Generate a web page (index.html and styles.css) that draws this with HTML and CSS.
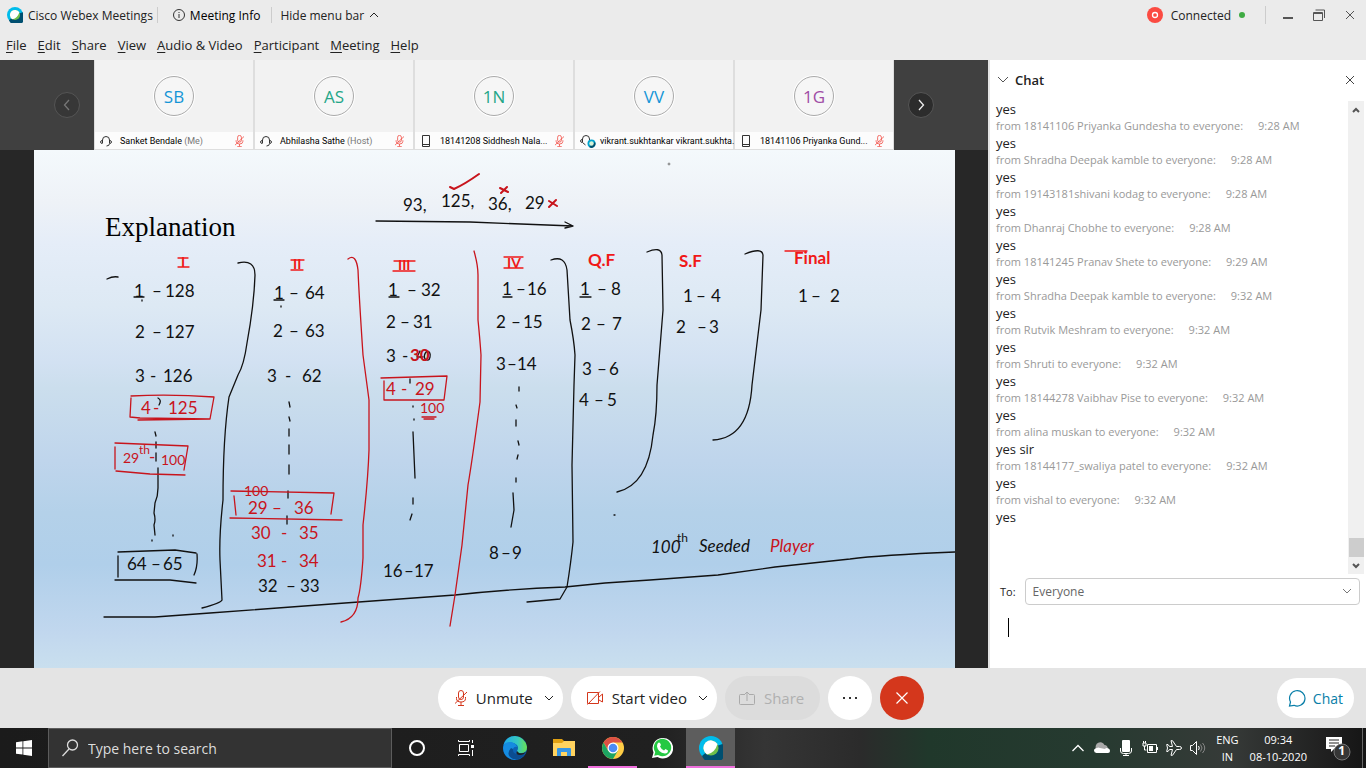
FILE: index.html
```html
<!DOCTYPE html>
<html lang="en">
<head>
<meta charset="utf-8">
<title>Cisco Webex Meetings</title>
<link rel="stylesheet" href="styles.css">
</head>
<body>
<svg class="defs" aria-hidden="true">
  <defs>
    <linearGradient id="edge-a" x1="0" y1="0" x2="1" y2="0"><stop offset="0" stop-color="#1fa8e8"/><stop offset=".6" stop-color="#36c9c0"/><stop offset="1" stop-color="#6be04f"/></linearGradient>
    <symbol id="webex" viewBox="0 0 24 24"><circle cx="12" cy="12" r="12" fill="#00bceb"/><path d="M23.5 8A12 12 0 1 1 3 20L12 12Z" fill="#004f70"/><circle cx="12" cy="12" r="7.6" fill="#6ebe4a"/><path d="M18.500 8A7.600 7.600 0 1 0 8 18.400Q16 17 18.500 8Z" fill="#fff"/></symbol>
    <symbol id="mic-off" viewBox="0 0 14 16"><g fill="none" stroke="currentColor"><rect x="4.500" y=".5" width="5" height="9" rx="2.500"/><path d="M2.500 7v1.500q0 3.500 4.500 3.500t4.500-3.500V7M7 12v3M4 15.500h6M1 13.500 13 2"/></g></symbol>
    <symbol id="headset" viewBox="0 0 12 12"><path d="M2.500 8V5a3.500 3.500 0 0 1 7 0v3M2.500 5.500q-2 0-2 1.500t2 1.500M9.500 5.500q2 0 2 1.500t-2 1.500q0 2.500-3 2.500" fill="none" stroke="currentColor"/></symbol>
    <symbol id="phone" viewBox="0 0 12 12"><path d="M2.500.5h7v11h-7zM2.500 9.500h7" fill="none" stroke="currentColor"/></symbol>
    <symbol id="down" viewBox="0 0 10 10"><path d="M1 3l4 4 4-4" fill="none" stroke="currentColor"/></symbol>
    <symbol id="cross" viewBox="0 0 10 10"><path d="M1 1l8 8M9 1 1 9" fill="none" stroke="currentColor"/></symbol>
  </defs>
</svg>

<header class="titlebar">
  <svg class="i16"><use href="#webex"/></svg>
  <span class="app-name">Cisco Webex Meetings</span>
  <button class="bar-btn info"><svg class="i12" viewBox="0 0 12 12"><circle cx="6" cy="6" r="5.500" fill="none" stroke="#333"/><path d="M6 5v4M6 3v1" stroke="#333"/></svg>Meeting Info</button>
  <button class="bar-btn">Hide menu bar<svg class="i10 flip"><use href="#down"/></svg></button>
  <div class="status">
    <svg class="i16" viewBox="0 0 16 16"><circle cx="8" cy="8" r="8" fill="#fb4b42"/><circle cx="8" cy="8" r="2.500" fill="none" stroke="#fff" stroke-width="1.300"/></svg>
    <span>Connected</span><i class="dot"></i>
  </div>
  <div class="window-btns">
    <button aria-label="Minimize"><svg class="i10" viewBox="0 0 10 10"><path d="M0 8h10" stroke="#555" stroke-width="2"/></svg></button>
    <button aria-label="Restore"><svg class="i12" viewBox="0 0 12 12"><path d="M.5 3.500h9v8h-9zM.5 4.500h9M2.500 1h9v8" fill="none" stroke="#555"/></svg></button>
    <button aria-label="Close"><svg class="i10"><use href="#cross"/></svg></button>
  </div>
</header>

<nav class="menubar">
  <button><u>F</u>ile</button><button><u>E</u>dit</button><button><u>S</u>hare</button><button><u>V</u>iew</button><button><u>A</u>udio &amp; Video</button><button><u>P</u>articipant</button><button><u>M</u>eeting</button><button><u>H</u>elp</button>
</nav>

<main class="workspace">
  <section class="stage">
    <div class="filmstrip">
      <div class="side left"><button class="round dim" aria-label="Previous"><svg class="i12" viewBox="0 0 12 12"><path d="M8 1 3.500 6 8 11" fill="none" stroke="currentColor" stroke-width="1.300"/></svg></button></div>
      <article class="person"><div class="avatar blue">SB</div><footer><svg class="i12"><use href="#headset"/></svg><span class="name">Sanket Bendale <em>(Me)</em></span><svg class="mute"><use href="#mic-off"/></svg></footer></article>
      <article class="person"><div class="avatar teal">AS</div><footer><svg class="i12"><use href="#headset"/></svg><span class="name">Abhilasha Sathe <em>(Host)</em></span><svg class="mute"><use href="#mic-off"/></svg></footer></article>
      <article class="person"><div class="avatar teal">1N</div><footer><svg class="i12"><use href="#phone"/></svg><span class="name">18141208 Siddhesh Nala...</span><svg class="mute"><use href="#mic-off"/></svg></footer></article>
      <article class="person"><div class="avatar blue">VV</div><footer><svg class="call" viewBox="0 0 16 14"><path d="M2.500 8V5a3.500 3.500 0 0 1 7 0v1M2.500 5.500q-2 0-2 1.500t2 1.500l3 2.500" fill="none" stroke="#333"/><circle cx="11.500" cy="9.500" r="4" fill="#00a3cf"/><path d="M15 8a4 4 0 0 1-6 5z" fill="#00506e"/><circle cx="11.500" cy="9.500" r="2.200" fill="#d8f3d8"/></svg><span class="name">vikrant.sukhtankar vikrant.sukhta...</span></footer></article>
      <article class="person"><div class="avatar purple">1G</div><footer><svg class="i12"><use href="#phone"/></svg><span class="name">18141106 Priyanka Gund...</span><svg class="mute"><use href="#mic-off"/></svg></footer></article>
      <div class="side right"><button class="round" aria-label="Next"><svg class="i12" viewBox="0 0 12 12"><path d="M4 1l4.500 5L4 11" fill="none" stroke="currentColor" stroke-width="1.300"/></svg></button></div>
    </div>
    <div class="share">
      <svg class="slide" viewBox="34 150 921 518" role="img" aria-label="Explanation slide with handwritten match pairings">
        <text class="slide-title" x="105" y="236">Explanation</text>
        <g class="ink">
          <text y="211"><tspan x="403">93,</tspan><tspan x="441" y="207">125,</tspan><tspan x="488" y="210">36,</tspan><tspan x="525" y="209">29</tspan></text>
          <text y="298"><tspan x="134" y="297">1</tspan><tspan x="152">–</tspan><tspan x="165">128</tspan></text>
          <text y="338"><tspan x="135">2</tspan><tspan x="152">–</tspan><tspan x="165">127</tspan></text>
          <text y="382"><tspan x="135">3</tspan><tspan x="150">-</tspan><tspan x="163">126</tspan></text>
          <text y="570"><tspan x="127">64</tspan><tspan x="151">–</tspan><tspan x="163">65</tspan></text>
          <text y="299"><tspan x="274">1</tspan><tspan x="289">–</tspan><tspan x="305">64</tspan></text>
          <text y="337"><tspan x="273">2</tspan><tspan x="289">–</tspan><tspan x="305">63</tspan></text>
          <text y="382"><tspan x="267">3</tspan><tspan x="285">-</tspan><tspan x="302">62</tspan></text>
          <text y="592"><tspan x="258">32</tspan><tspan x="286">–</tspan><tspan x="300">33</tspan></text>
          <text y="296"><tspan x="388">1</tspan><tspan x="407">–</tspan><tspan x="421">32</tspan></text>
          <text y="328"><tspan x="386">2</tspan><tspan x="400">–</tspan><tspan x="413">31</tspan></text>
          <text y="362"><tspan x="386">3</tspan><tspan x="402">-</tspan></text>
          <text y="577"><tspan x="383">16</tspan><tspan x="404">–</tspan><tspan x="414">17</tspan></text>
          <text y="295"><tspan x="502">1</tspan><tspan x="516">–</tspan><tspan x="527">16</tspan></text>
          <text y="328"><tspan x="496">2</tspan><tspan x="511">–</tspan><tspan x="523">15</tspan></text>
          <text y="370"><tspan x="496">3</tspan><tspan x="507">–</tspan><tspan x="517">14</tspan></text>
          <text y="559"><tspan x="489">8</tspan><tspan x="501">–</tspan><tspan x="512">9</tspan></text>
          <text y="295"><tspan x="580">1</tspan><tspan x="597">–</tspan><tspan x="611">8</tspan></text>
          <text y="330"><tspan x="581">2</tspan><tspan x="596">–</tspan><tspan x="612">7</tspan></text>
          <text y="375"><tspan x="582">3</tspan><tspan x="597">–</tspan><tspan x="609">6</tspan></text>
          <text y="406"><tspan x="579">4</tspan><tspan x="594">–</tspan><tspan x="607">5</tspan></text>
          <text y="302"><tspan x="683">1</tspan><tspan x="696">–</tspan><tspan x="711">4</tspan></text>
          <text y="333"><tspan x="676">2</tspan><tspan x="697">–</tspan><tspan x="709">3</tspan></text>
          <text y="302"><tspan x="798">1</tspan><tspan x="811">–</tspan><tspan x="830">2</tspan></text>
          <text class="word" x="651" y="553">100</text><text class="sup" x="677" y="542">th</text><text class="word" x="699" y="552">Seeded</text>
          <path d="M376 221 470 222 573 226M565 222l8 4-8 2M107 279q6-3 11-2M238 263q17-4 17 12-1 30-8 68-3 22-9 32l-9 22q-6 40-6 103-4 35-3 60l2 40q-1 3-20 8"/>
          <path d="M104 617h51l55-4 135-10 110-8q55-6 110-8l40-4 45-3 68-5 57-8 75-8q30-4 105-7"/>
          <path d="M551 260q14-5 16 10l3 50q4 20 5 35l-1 30-2 80 1 77q-2 20-6 45l-7 12-33 3M647 252q14-6 15 3l1 55-6 75q0 30-4 50-5 50-36 57M745 254q17-7 18 1l-2 55-9 75q-3 53-39 55"/>
          <path d="M118 552l57-2 21 3M118 556v21M115 580h55l26 3M197 554q1 12-3 21M158 398q4 2 1 7M155 432l1 4M156 442v6M156 453v8M158 468v20q0 8-3 15l-1 10q2 7 0 12l1 10M152 540v1M173 535v1"/>
          <path d="M289 402l1 5M289 417l1 4M289 429v7M289 445v9M289 465v9M288 491v7M287 516v8M410 379v4M413 406v1M414 419v1M413 432l2 46M413 498v6M412 514l-2 6"/>
          <path d="M519 387v4M516 405l1 3M516 420v6M518 441l1 4M518 455l-1 4M516 478v4M513 493l1 17-3 17M134 297h10M274 300h10M389 297h10M503 297h9M580 297h11M142 300v1M281 306v1M614 515h1"/>
          <path d="M427 351q-4 4-2 8 4 3 5-2t-3-6M420 351l-3 6h6"/>
          <path class="faint" d="M668 164h2M669 163v2"/>
        </g>
        <g class="ink red">
          <text y="417"><tspan x="141" y="414">4</tspan><tspan x="153">-</tspan><tspan x="168">125</tspan></text>
          <text y="463"><tspan x="123" class="small">29</tspan><tspan x="139" y="454" class="sup">th</tspan><tspan x="149" y="463">-</tspan><tspan x="161" y="465" class="small">100</tspan></text>
          <text class="small" x="244" y="496">100</text>
          <text y="514"><tspan x="248">29</tspan><tspan x="272">–</tspan><tspan x="294">36</tspan></text>
          <text y="539"><tspan x="251">30</tspan><tspan x="281">-</tspan><tspan x="299">35</tspan></text>
          <text y="567"><tspan x="257">31</tspan><tspan x="281">-</tspan><tspan x="299">34</tspan></text>
          <text class="heavy" x="410" y="361">30</text>
          <text y="395"><tspan x="386">4</tspan><tspan x="401">-</tspan><tspan x="415">29</tspan></text>
          <text class="small" x="420" y="413">100</text>
          <text class="word" x="770" y="552">Player</text>
          <path d="M131 396q40-2 83 1l-4 22-70-1-10-1 1-19M138 420l72-1M115 443l73 3-4 24M115 447v22M116 471l34 3 35 1M231 491l103 2-3 21M234 496l2 19M230 518l112 2M381 378l66-2-3 24h-60v-19M422 417h14M424 419h10"/>
          <path d="M348 259q8-6 10 11 1 25 5 85l6 45v50q-1 30-6 75v33q-2 30-5 40 0 20-17 24M474 251q4 14 4 24v45q2 20 3 35l-1 47q-8 60-12 83l-6 60-7 50-5 31"/>
          <path class="check" d="M450 187l4 2q11-5 25-15M500 188l8 4M507 187l-6 6M549 201l8 5M556 200l-7 7"/>
        </g>
        <g class="ink label">
          <text x="181" y="267">I</text><text x="293" y="269">II</text><text x="398" y="270">III</text><text x="507" y="268">IV</text>
          <text class="wide" x="588" y="266">Q.F</text><text class="wide" x="679" y="267">S.F</text><text class="wide" x="794" y="264">Final</text>
          <path d="M178 258h10M178 267h11M291 260h13M291 270h12M394 261h21M393 271h22M504 257h19M504 268h19M785 251h22"/>
        </g>
      </svg>
    </div>
  </section>

  <aside class="chat">
    <header><svg class="i12" viewBox="0 0 12 12"><path d="M1 3l5 5 5-5" fill="none" stroke="#555"/></svg><h2>Chat</h2><button aria-label="Close chat"><svg class="i10"><use href="#cross"/></svg></button></header>
    <div class="log">
      <div class="messages">
        <p>yes</p>
        <p class="from">from 18141106 Priyanka Gundesha to everyone:<time>9:28 AM</time></p><p>yes</p>
        <p class="from">from Shradha Deepak kamble to everyone:<time>9:28 AM</time></p><p>yes</p>
        <p class="from">from 19143181shivani kodag to everyone:<time>9:28 AM</time></p><p>yes</p>
        <p class="from">from Dhanraj Chobhe to everyone:<time>9:28 AM</time></p><p>yes</p>
        <p class="from">from 18141245 Pranav Shete to everyone:<time>9:29 AM</time></p><p>yes</p>
        <p class="from">from Shradha Deepak kamble to everyone:<time>9:32 AM</time></p><p>yes</p>
        <p class="from">from Rutvik Meshram to everyone:<time>9:32 AM</time></p><p>yes</p>
        <p class="from">from Shruti to everyone:<time>9:32 AM</time></p><p>yes</p>
        <p class="from">from 18144278 Vaibhav Pise to everyone:<time>9:32 AM</time></p><p>yes</p>
        <p class="from">from alina muskan to everyone:<time>9:32 AM</time></p><p>yes sir</p>
        <p class="from">from 18144177_swaliya patel to everyone:<time>9:32 AM</time></p><p>yes</p>
        <p class="from">from vishal to everyone:<time>9:32 AM</time></p><p>yes</p>
      </div>
      <div class="scrollbar"><svg class="i10 flip" viewBox="0 0 10 10"><path d="M2 3l3 3 3-3" fill="none" stroke="#555" stroke-width="2"/></svg><span class="thumb"></span><svg class="i10" viewBox="0 0 10 10"><path d="M2 3l3 3 3-3" fill="none" stroke="#555" stroke-width="2"/></svg></div>
    </div>
    <div class="recipient"><label for="to">To:</label><div class="select"><select id="to"><option>Everyone</option></select><svg class="i10"><use href="#down"/></svg></div></div>
    <div class="compose"><span class="caret"></span><textarea aria-label="Chat message"></textarea></div>
  </aside>
</main>

<div class="controls">
  <div class="center">
    <button class="pill"><svg class="mic"><use href="#mic-off"/></svg>Unmute<svg class="i10 end"><use href="#down"/></svg></button>
    <button class="pill"><svg class="cam" viewBox="0 0 17 14"><path d="M.5 1.500h11v11H.5zM12 6l3.500-3v8L12 9M.5 13.500 13 .5" fill="none" stroke="#d4371c"/></svg>Start video<svg class="i10 end"><use href="#down"/></svg></button>
    <button class="pill" disabled><svg class="cam" viewBox="0 0 17 14"><path d="M5 3.500H1.500q-1 0-1 1v8q0 1 1 1h13q1 0 1-1v-8q0-1-1-1H11M8 10V1M5 4l3-3 3 3" fill="none" stroke="#aaa"/></svg>Share</button>
    <button class="circle" aria-label="More options"><svg class="i16" viewBox="0 0 16 16"><path d="M1 8h2M7 8h2M13 8h2" stroke="#333" stroke-width="2"/></svg></button>
    <button class="circle leave" aria-label="Leave"><svg class="i14" viewBox="0 0 14 14"><path d="M1.500 1.500l11 11M12.500 1.500l-11 11" stroke="#fff" stroke-width="1.200"/></svg></button>
  </div>
  <button class="pill chat-btn"><svg class="i18" viewBox="0 0 18 18"><path d="M2.500 13A7.700 7.700 0 1 1 6 16.300L1.500 17z" fill="none" stroke="currentColor" stroke-width="1.200"/></svg>Chat</button>
</div>

<footer class="taskbar">
  <button class="start" aria-label="Start"><svg class="i16" viewBox="0 0 16 16"><path d="M0 2.200 6.500 1.300V7.500H0zM7.300 1.200 16 0v7.500H7.300zM0 8.400h6.500v6.200L0 13.800zM7.300 8.400H16V16l-8.700-1.200z" fill="#fff"/></svg></button>
  <label class="search"><svg class="i18" viewBox="0 0 18 18"><circle cx="11.500" cy="6" r="5" fill="none" stroke="#ddd" stroke-width="1.300"/><path d="M8 10 1.500 17" stroke="#ddd" stroke-width="1.300"/></svg><input type="search" placeholder="Type here to search" aria-label="Type here to search"></label>
  <div class="apps">
    <button aria-label="Cortana"><svg class="i18" viewBox="0 0 18 18"><circle cx="9" cy="9" r="7" fill="none" stroke="#fff" stroke-width="2"/></svg></button>
    <button aria-label="Task View"><svg class="i18" viewBox="0 0 18 18"><path d="M2.500 5.500h9v7h-9zM1.500 1v1.500h11V1M1.500 17v-1.500h11V17M15.500 1v3M15.500 11v6" fill="none" stroke="#fff"/><path d="M14 6h3v3h-3z" fill="#fff"/></svg></button>
    <button aria-label="Edge"><svg class="i24" viewBox="0 0 24 24"><circle cx="12" cy="12" r="12" fill="#0c62b4"/><path d="M.5 9Q3 0 12 0q10 1 12 11 0 6-6 6-4 0-4-2 2-3 0-6-5-5-13.500 0z" fill="url(#edge-a)"/><path d="M0 12Q1 5 8 6q5 1 6 5-3-1-4 2-1 5 5 9l-3 2Q1 23 0 12z" fill="#158be0"/><path d="M10 13q-1 7 12 5-5 7-12 5-8-4-2-11z" fill="#0b4d91"/><path d="M14 15q-2 4 3 4 4 0 6-3-4 2-7 1z" fill="#202020"/></svg></button>
    <button aria-label="File Explorer"><svg class="i22" viewBox="0 0 22 20"><path d="M0 1h9l2 2h11v15H0z" fill="#e0a012"/><path d="M0 5h9l2-2h11v15H0z" fill="#ffd35f"/><path d="M4 18v-7q0-1 1-1h12q1 0 1 1v7h-4v-4H8v4z" fill="#3796e4"/></svg></button>
    <button class="open" aria-label="Chrome"><svg class="i22" viewBox="0 0 22 22"><circle cx="11" cy="11" r="11" fill="#ffcd46"/><path d="M1.500 5.500A11 11 0 0 1 20.500 5.500H11L6.300 13.500z" fill="#dd5144"/><path d="M1.500 5.500A11 11 0 0 0 11 22l4.700-8H6.300z" fill="#1da462"/><circle cx="11" cy="11" r="5.500" fill="#fff"/><circle cx="11" cy="11" r="4.300" fill="#4c8bf5"/></svg></button>
    <button aria-label="WhatsApp"><svg class="i22" viewBox="0 0 22 22"><path d="M1 21l1.500-5.500A10.300 10.300 0 1 1 6.500 20z" fill="#fff"/><path d="M3.200 18.800l1-3.500A8.700 8.700 0 1 1 7 18z" fill="#25c943"/><path d="M7 6q1-1 2 0l1 2-1 1.500q1 2.500 4 4l1.500-1.500 2.500 1.500q0 3-3 3-7-1-8-7 0-2.500 1-3.500z" fill="#fff"/></svg></button>
    <button class="active" aria-label="Webex"><svg class="i24"><use href="#webex"/></svg></button>
  </div>
  <div class="tray">
    <svg class="i16" viewBox="0 0 16 16"><path d="M2.500 11 8 5.500l5.500 5.500" fill="none" stroke="#fff" stroke-width="1.300"/></svg>
    <svg class="i16" viewBox="0 0 16 16"><path d="M2 9a4.500 4.500 0 0 1 8.500-4q3 0 3.500 4z" fill="#aaa"/><path d="M2.500 13Q0 12.500 0 10.500T3 8q1-1 3 0l5 1 1-1q4 0 4 3 0 2-2 2z" fill="#fff"/></svg>
    <svg class="i16" viewBox="0 0 16 16"><rect x="4" y="0" width="8" height="12" rx="1" fill="#fff"/><path d="M2.500 8v3q0 2.500 3 2.500h5q3 0 3-2.500V8M8 13v3M5 15.500h6" fill="none" stroke="#fff"/></svg>
    <svg class="i16" viewBox="0 0 16 16"><path d="M5.500 4.500h9v8h-9zM15.500 7v3M1 3v3h3V3zM1.500 1v2M3.500 1v2M2.500 6v4h2" fill="none" stroke="#fff"/><path d="M7 6h4v5H7z" fill="#fff"/></svg>
    <svg class="i16" viewBox="0 0 16 16"><path d="M15.500 8q0-1.500-2-1.500h-3L6.500.7H5l1.500 5.800h-3L2 4.500H.7L1.500 8l-.8 3.500H2l1.500-2h3L5 15.300h1.500l4-5.800h3q2 0 2-1.500z" fill="none" stroke="#fff"/></svg>
    <svg class="i16" viewBox="0 0 16 16"><path d="M.5 5.500h2l4-4v13l-4-4h-2zM8.500 6q1.500 2 0 4" fill="none" stroke="#fff"/><path d="M10.500 4.500q3 3.500 0 7M12.500 3q4.500 5 0 10" fill="none" stroke="#888"/></svg>
    <div class="lang">ENG<br>IN</div>
    <div class="clock">09:34<br>08-10-2020</div>
    <button class="notes" aria-label="Notifications"><svg viewBox="0 0 26 26"><path d="M1 2h16v12H9l-3 3v-3H1z" fill="#fff"/><path d="M4 5h10M4 8h10M4 11h6" stroke="#222"/><circle cx="17" cy="17" r="8" fill="#363636" stroke="#777"/></svg><b>1</b></button>
  </div>
</footer>
</body>
</html>
```

FILE: styles.css
```css
* { box-sizing: border-box; }
body {
  margin: 0;
  min-height: 100vh;
  display: flex;
  flex-direction: column;
  background: #ebebeb;
  color: #222;
  font-family: "Open Sans", "Noto Sans", sans-serif;
  font-size: 12px;
}
button {
  border: 0;
  padding: 0;
  background: none;
  font: inherit;
  color: inherit;
  display: flex;
  align-items: center;
}
svg { display: block; flex: none; }
p, h2 { margin: 0; }
.defs { position: absolute; width: 0; height: 0; }
.i10 { width: 10px; height: 10px; }
.i12 { width: 12px; height: 12px; }
.i14 { width: 14px; height: 14px; }
.i16 { width: 16px; height: 16px; }
.i18 { width: 18px; height: 18px; }
.i22 { width: 22px; height: 22px; }
.i24 { width: 24px; height: 24px; }
.flip { transform: rotate(180deg); }

/* Title and menu bars */
.titlebar { height: 30px; display: flex; align-items: center; padding: 0 11px 0 7px; }
.app-name { margin: 0 4px 0 5px; }
.bar-btn { height: 16px; gap: 5px; padding: 0 8px; border-left: 1px solid #ccc; }
.bar-btn.info { padding: 0 11px 0 15px; color: #000; }
.status { display: flex; align-items: center; gap: 8px; margin-left: auto; }
.dot { width: 6px; height: 6px; border-radius: 50%; background: #3fab43; }
.window-btns { display: flex; gap: 20px; margin-left: 20px; padding-left: 17px; border-left: 1px solid #ccc; height: 18px; color: #555; }
.menubar { height: 30px; display: flex; align-items: center; gap: 11px; padding: 0 6px; font-size: 13px; }
.menubar button { display: block; }
.menubar u { text-underline-offset: 2px; }

/* Meeting area */
.workspace { flex: 1; display: flex; min-height: 608px; }
.stage { flex: 1; min-width: 0; display: flex; flex-direction: column; background: #272727; }
.filmstrip { height: 90px; display: flex; background: #404040; }
.side { flex: 1; display: flex; align-items: center; padding: 0 14px; }
.side.left { justify-content: flex-end; }
.round { width: 26px; height: 26px; border: 1px solid #555; border-radius: 50%; background: #2c2c2c; color: #eee; justify-content: center; }
.round.dim { background: #373737; color: #777; }
.person { width: 160px; display: flex; flex-direction: column; align-items: center; justify-content: space-between; padding-top: 16px; background: #f2f2f2; border: 1px solid #dedede; border-top-width: 0; }
.avatar { width: 40px; height: 40px; border-radius: 50%; border: 1px solid #aaa; box-shadow: 0 0 0 1px #fff; background: #f6f6f6; display: grid; place-items: center; font-size: 17px; }
.blue { color: #1495d6; }
.teal { color: #25a688; }
.purple { color: #a04ca5; }
.person footer { align-self: stretch; height: 17px; display: flex; align-items: center; gap: 8px; padding: 0 8px 0 5px; background: #fcfcfc; color: #333; font-family: Roboto, sans-serif; font-size: 9px; }
.name { flex: 1; min-width: 0; white-space: nowrap; color: #000; }
.person footer:has(.call) { padding-right: 0; gap: 4px; }
.name em { font-style: normal; color: #777; }
.mute { width: 11px; height: 12px; color: #f0433a; }
.call { width: 16px; height: 14px; }

/* Shared slide */
.share { flex: 1; display: flex; padding: 0 33px 0 34px; }
.slide { flex: 1; min-width: 0; width: 100%; background: linear-gradient(#f4f9fc 0%, #eef2f7 10%, #e5edf8 18%, #dde9f4 30%, #d2e1f2 41%, #cbdeed 46%, #bfd5ec 60%, #b4d1e9 70%, #b0cfea 80%, #c1d7ee 93%, #c9dfee 100%); }
.slide-title { font: 27px "Liberation Serif", serif; }
.ink { fill: #111; font: 17px Lato, sans-serif; }
.ink path { fill: none; stroke: #111; stroke-width: 1.3; stroke-linecap: round; stroke-linejoin: round; }
.ink .faint { stroke: #777; stroke-width: 1; }
.ink .small { font-size: 14px; }
.ink .sup { font-size: 12px; }
.ink .word { font-size: 17px; font-style: italic; }
.ink .heavy { font-weight: 700; }
.ink.red { fill: #c8141c; }
.ink.red path { stroke: #c8141c; }
.ink.red .check { stroke-width: 2; }
.ink.label { fill: #f01818; font-size: 14px; font-weight: 700; }
.ink.label .wide { font-size: 17px; }
.ink.label path { stroke: #f01818; }

/* Chat panel */
.chat { width: 378px; display: flex; flex-direction: column; background: #fff; border-left: 2px solid #e4e4e4; }
.chat header { height: 41px; display: flex; align-items: center; gap: 6px; padding: 0 11px 2px 7px; color: #444; }
.chat h2 { font-size: 13px; font-weight: 600; color: #222; }
.chat header button { margin-left: auto; }
.log { flex: 1; display: flex; }
.messages { flex: 1; padding-left: 6px; }
.messages p { font-size: 13px; line-height: 17px; color: #222; }
.messages .from { padding-bottom: 2px; font-size: 11px; line-height: 15px; color: #999; }
.messages time { margin-left: 15px; }
.scrollbar { width: 16px; margin-right: 2px; background: #f0f0f0; display: flex; flex-direction: column; align-items: center; padding: 4px 0 3px; }
.thumb { width: 15px; height: 19px; margin: auto 0 4px; background: #cdcdcd; }
.recipient { display: flex; align-items: center; gap: 9px; padding: 4px 6px 0 10px; }
.recipient label { font-size: 11px; }
.select { flex: 1; position: relative; }
.select select { width: 100%; height: 27px; padding: 0 7px; appearance: none; border: 1px solid #ccc; border-radius: 4px; background: #fff; font: inherit; color: #666; }
.select svg { position: absolute; right: 8px; top: 8px; color: #777; }
.compose { display: flex; height: 63px; padding: 13px 18px; }
.caret { width: 1px; height: 19px; background: #000; }
.compose textarea { flex: 1; border: 0; padding: 0; resize: none; font: inherit; outline: 0; }

/* Meeting controls */
.controls { height: 60px; display: grid; grid-template-columns: 1fr auto 1fr; align-items: center; padding: 0 12px 0 8px; background: #e4e4e4; }
.center { grid-column: 2; display: flex; gap: 8px; }
.pill { height: 44px; gap: 8px; padding: 0 16px; border-radius: 22px; background: #fff; font-size: 15px; }
.pill:disabled { background: #dcdcdc; color: #b0b0b0; padding-left: 14px; }
.pill .end { margin-right: -7px; margin-left: 3px; }
.mic { width: 14px; height: 16px; color: #d4371c; }
.cam { width: 17px; height: 14px; }
.circle { width: 44px; height: 44px; border-radius: 50%; justify-content: center; background: #fff; }
.leave { background: #d4371c; }
.chat-btn { justify-self: end; height: 40px; padding: 0 11px; gap: 7px; font-size: 14px; color: #087ea8; }

/* Windows taskbar */
.taskbar { height: 40px; display: flex; color: #fff; background: linear-gradient(90deg, #1b1b1b 0%, #202020 48%, #353535 56%, #2b2b2b 63%, #20382b 68%, #263a30 80%, #363a38 90%, #202020 97%, #151515 100%); }
.start { width: 48px; justify-content: center; }
.search { width: 344px; display: flex; align-items: center; gap: 9px; padding-left: 12px; border: 1px solid #5c5c5c; background: #333; }
.search input { flex: 1; min-width: 0; border: 0; outline: 0; padding: 0; background: none; color: #ddd; font: inherit; font-size: 14px; }
.search input::placeholder { color: #ddd; opacity: 1; }
.apps { display: flex; }
.apps button { width: 49px; justify-content: center; }
.apps .open { border-bottom: 2px solid #ef6fdc; padding-top: 2px; }
.apps .active { background: #5d5d5d; border-bottom: 2px solid #ef6fdc; padding-top: 2px; }
.tray { margin-left: auto; display: flex; align-items: center; gap: 8px; padding-right: 3px; text-align: center; font-size: 11px; line-height: 17px; }
.lang { padding: 0 3px 0 2px; }
.notes { position: relative; padding: 0 11px 0 10px; border-right: 1px solid #666; height: 40px; }
.notes svg { width: 26px; height: 26px; }
.notes b { position: absolute; right: 17px; top: 14px; font-size: 12px; }
```
